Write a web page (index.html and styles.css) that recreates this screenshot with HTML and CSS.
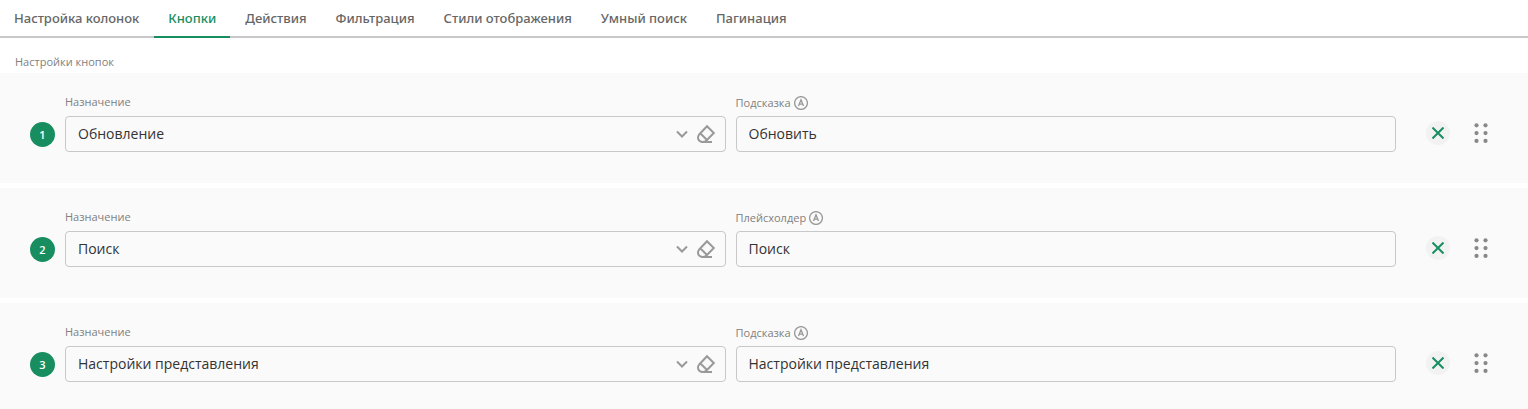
FILE: index.html
```
<!doctype html>
<html lang="ru">
<head>
  <meta charset="utf-8">
  <title>Настройки кнопок</title>
  <meta name="viewport" content="width=device-width, initial-scale=1.0">
  <link rel="stylesheet" href="styles.css">
</head>
<body>

  <!-- shared icons -->
  <svg class="sprite" aria-hidden="true">
    <symbol id="chevron" viewBox="0 0 12 8">
      <path d="M1 1.500l5 5 5-5"/>
    </symbol>
    <symbol id="eraser" viewBox="0 0 20 20">
      <path d="M11 2.200l6.800 6.800-7.300 7.500Q8.500 18.200 6 18Q2 17 2 13.500Q2 12 3.200 10.500zM4.500 9.500l6.500 6.500M6 18h10"/>
    </symbol>
    <symbol id="cross" viewBox="0 0 12 12">
      <path d="M0.500 0.500l11 11M11.500 0.500l-11 11"/>
    </symbol>
    <symbol id="auto" viewBox="0 0 14 14">
      <circle cx="7" cy="7" r="6.400"/>
      <path d="M4.500 10L7 3.800 9.500 10M5.300 8.200h3.400"/>
    </symbol>
    <symbol id="grip" viewBox="0 0 14 20">
      <circle cx="2.500" cy="2.300" r="2.100"/><circle cx="11.500" cy="2.300" r="2.100"/>
      <circle cx="2.500" cy="10.100" r="2.100"/><circle cx="11.500" cy="10.100" r="2.100"/>
      <circle cx="2.500" cy="17.900" r="2.100"/><circle cx="11.500" cy="17.900" r="2.100"/>
    </symbol>
  </svg>

  <nav class="tabs" role="tablist">
    <button class="tab" role="tab">Настройка колонок</button>
    <button class="tab active" role="tab" aria-selected="true">Кнопки</button>
    <button class="tab" role="tab">Действия</button>
    <button class="tab" role="tab">Фильтрация</button>
    <button class="tab" role="tab">Стили отображения</button>
    <button class="tab" role="tab">Умный поиск</button>
    <button class="tab" role="tab">Пагинация</button>
  </nav>

  <h1 class="title">Настройки кнопок</h1>

  <main class="rows">
    <section class="row">
      <span class="number">1</span>
      <div class="field">
        <label class="label" for="purpose1">Назначение</label>
        <div class="control">
          <select class="input" id="purpose1"><option>Обновление</option></select>
          <svg class="chevron"><use href="#chevron"/></svg>
          <button class="erase" aria-label="Очистить"><svg><use href="#eraser"/></svg></button>
        </div>
      </div>
      <div class="field">
        <label class="label hint" for="text1">Подсказка<svg class="auto"><use href="#auto"/></svg></label>
        <input class="input" id="text1" type="text" value="Обновить">
      </div>
      <button class="remove" aria-label="Удалить"><svg><use href="#cross"/></svg></button>
      <button class="grip" aria-label="Переместить"><svg><use href="#grip"/></svg></button>
    </section>

    <section class="row">
      <span class="number">2</span>
      <div class="field">
        <label class="label" for="purpose2">Назначение</label>
        <div class="control">
          <select class="input" id="purpose2"><option>Поиск</option></select>
          <svg class="chevron"><use href="#chevron"/></svg>
          <button class="erase" aria-label="Очистить"><svg><use href="#eraser"/></svg></button>
        </div>
      </div>
      <div class="field">
        <label class="label hint" for="text2">Плейсхолдер<svg class="auto"><use href="#auto"/></svg></label>
        <input class="input" id="text2" type="text" value="Поиск">
      </div>
      <button class="remove" aria-label="Удалить"><svg><use href="#cross"/></svg></button>
      <button class="grip" aria-label="Переместить"><svg><use href="#grip"/></svg></button>
    </section>

    <section class="row">
      <span class="number">3</span>
      <div class="field">
        <label class="label" for="purpose3">Назначение</label>
        <div class="control">
          <select class="input" id="purpose3"><option>Настройки представления</option></select>
          <svg class="chevron"><use href="#chevron"/></svg>
          <button class="erase" aria-label="Очистить"><svg><use href="#eraser"/></svg></button>
        </div>
      </div>
      <div class="field">
        <label class="label hint" for="text3">Подсказка<svg class="auto"><use href="#auto"/></svg></label>
        <input class="input" id="text3" type="text" value="Настройки представления">
      </div>
      <button class="remove" aria-label="Удалить"><svg><use href="#cross"/></svg></button>
      <button class="grip" aria-label="Переместить"><svg><use href="#grip"/></svg></button>
    </section>
  </main>

</body>
</html>
```
FILE: styles.css
```
* {
  box-sizing: border-box;
}

body {
  margin: 0;
  height: 100vh;
  display: flex;
  flex-direction: column;
  background: #fff;
  color: #333;
  font-family: "Open Sans", "Liberation Sans", sans-serif;
}

button {
  padding: 0;
  border: 0;
  background: none;
  font-family: inherit;
  cursor: pointer;
}

svg {
  display: block;
  fill: none;
  stroke: #999;
  stroke-width: 2;
}

.sprite {
  position: absolute;
  width: 0;
  height: 0;
}

/* Tabs */

.tabs {
  flex: none;
  display: flex;
  gap: 1px;
  height: 38px;
  box-shadow: inset 0 -2px #c8c8c8;
}

.tab {
  padding: 0 14px;
  border-bottom: 2px solid transparent;
  color: #666;
  font-family: "Noto Sans", sans-serif;
  font-size: 13px;
  font-weight: 500;
  white-space: nowrap;
}

.tab.active {
  border-bottom-color: #188e60;
  color: #188e60;
}

.title {
  flex: none;
  margin: 16px 15px 3px;
  color: #808080;
  font-size: 11px;
  font-weight: 400;
  line-height: 16px;
}

/* Button settings */

.rows {
  flex: 1;
  min-height: 0;
  overflow-y: auto;
  scrollbar-width: none;
}

.row {
  display: flex;
  align-items: center;
  gap: 10px;
  height: 110px;
  margin-bottom: 5px;
  padding: 0 40px 0 30px;
  background: #fafafa;
}

.number {
  width: 25px;
  height: 25px;
  margin-top: 13px;
  border-radius: 50%;
  background: #188e60;
  color: #fff;
  font-size: 11px;
  font-weight: 600;
  line-height: 25px;
  text-align: center;
}

.field {
  flex: 1;
  min-width: 0;
  margin-bottom: 12px;
}

.label {
  display: flex;
  align-items: center;
  gap: 3px;
  height: 18px;
  margin-bottom: 5px;
  color: #808080;
  font-size: 11px;
}

.hint {
  padding-top: 2px;
}

.auto {
  width: 14px;
  height: 14px;
  stroke-width: 1.3;
}

.control {
  position: relative;
}

.input {
  display: block;
  width: 100%;
  height: 36px;
  padding: 0 12px;
  border: 1px solid #c8c8c8;
  border-radius: 4px;
  background: transparent;
  color: #333;
  font-family: inherit;
  font-size: 14px;
  appearance: none;
}

.chevron {
  position: absolute;
  top: 14px;
  right: 38px;
  width: 12px;
  height: 8px;
  pointer-events: none;
}

.erase {
  position: absolute;
  top: 8px;
  right: 10px;
}

.erase svg {
  width: 20px;
  height: 20px;
}

.remove {
  display: grid;
  place-items: center;
  width: 24px;
  height: 24px;
  margin: 10px 0 0 20px;
  border-radius: 50%;
  background: #f2f2f2;
}

.remove svg {
  width: 12px;
  height: 12px;
  stroke: #188e60;
}

.grip {
  margin: 10px 0 0 14px;
  cursor: grab;
}

.grip svg {
  width: 14px;
  height: 20px;
  fill: #888;
  stroke: none;
}
```
